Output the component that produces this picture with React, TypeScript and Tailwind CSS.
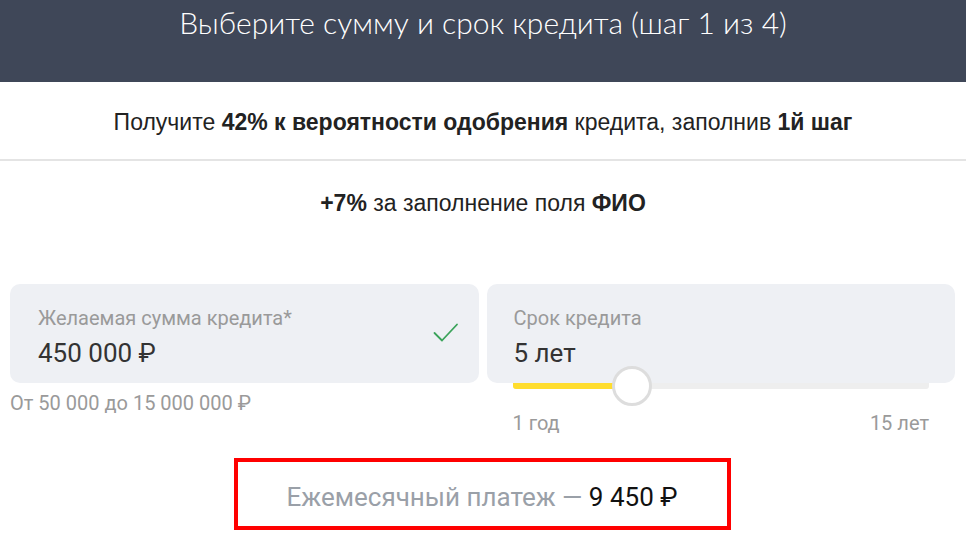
import React from 'react';

function CheckIcon() {
  return (
    <svg width="26" height="22" viewBox="0 0 26 22" fill="none">
      <polyline points="1.5,11 9,18.5 24,2.5" stroke="#3aa35a" strokeWidth="1.8" strokeLinecap="round" strokeLinejoin="round" />
    </svg>
  );
}

export default function App() {
  const years = 5;
  const percent = ((years - 1) / (15 - 1)) * 100;

  return (
    <div className="w-[966px] h-[546px] bg-white overflow-hidden font-['Roboto',sans-serif]">
      <div className="h-[82px] bg-[#3f4758] flex justify-center pt-[4px]">
        <h1 className="font-['Lato',sans-serif] font-light text-[30px] leading-[36px] text-white">
          Выберите сумму и срок кредита (шаг 1 из 4)
        </h1>
      </div>

      <div className="h-[79px] flex items-center justify-center pt-[4px] border-b-2 border-[#e4e4e4] font-['Liberation_Sans',Arial,sans-serif] text-[23px] text-[#222]">
        <p>
          Получите <b>42% к вероятности одобрения</b> кредита, заполнив <b>1й шаг</b>
        </p>
      </div>

      <div className="h-[82px] flex items-center justify-center pt-[2px] font-['Liberation_Sans',Arial,sans-serif] text-[23px] text-[#222]">
        <p>
          <b>+7%</b> за заполнение поля <b>ФИО</b>
        </p>
      </div>

      <div className="flex gap-[8px] pl-[10px] pr-[11px] mt-[41px]">
        <div className="flex-1">
          <div className="h-[99px] rounded-[10px] bg-[#eef0f4] pl-[28px] pr-[20px] pt-[22px] flex items-start justify-between">
            <div>
              <div className="text-[20px] leading-[24px] text-[#9a9a9a]">Желаемая сумма кредита*</div>
              <div className="text-[26px] leading-[30px] text-[#333] mt-[8px]">450 000 ₽</div>
            </div>
            <div className="mt-[16px]">
              <CheckIcon />
            </div>
          </div>
          <div className="text-[20px] leading-[24px] text-[#9a9a9a] mt-[8px]">От 50 000 до 15 000 000 ₽</div>
        </div>

        <div className="flex-1">
          <div className="h-[99px] rounded-[10px] bg-[#eef0f4] pl-[27px] pt-[22px]">
            <div className="text-[20px] leading-[24px] text-[#9a9a9a]">Срок кредита</div>
            <div className="text-[26px] leading-[30px] text-[#333] mt-[8px]">{years} лет</div>
          </div>
          <div className="mx-[26px]">
            <div className="relative h-[6px] bg-[#eeeeee] rounded-b-[3px]">
              <div className="h-full bg-[#ffdd2d] rounded-bl-[3px]" style={{ width: `${percent}%` }} />
              <div
                className="absolute top-[3px] w-[40px] h-[40px] -ml-[20px] -mt-[20px] rounded-full bg-white border-[3px] border-[#dddddd]"
                style={{ left: `${percent}%` }}
              />
            </div>
            <div className="flex justify-between text-[20px] leading-[24px] text-[#9a9a9a] mt-[22px]">
              <span>1 год</span>
              <span>15 лет</span>
            </div>
          </div>
        </div>
      </div>

      <div className="flex justify-center mt-[23px] pr-[2px]">
        <div className="w-[497px] h-[72px] border-4 border-[#ff0000] flex items-center justify-center pt-[6px] text-[26px]">
          <span className="text-[#9aa0a8]">Ежемесячный платеж —&nbsp;</span>
          <span className="text-[#111]">9 450 ₽</span>
        </div>
      </div>
    </div>
  );
}
